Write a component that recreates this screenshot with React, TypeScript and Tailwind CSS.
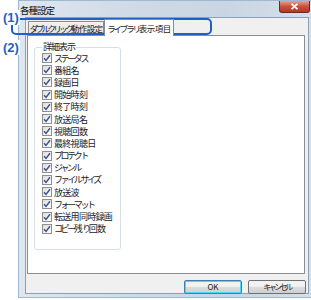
import React from "react";

const items = [
  "ステータス",
  "番組名",
  "録画日",
  "開始時刻",
  "終了時刻",
  "放送局名",
  "視聴回数",
  "最終視聴日",
  "プロテクト",
  "ジャンル",
  "ファイルサイズ",
  "放送波",
  "フォーマット",
  "転送用同時録画",
  "コピー残り回数",
];

// kana in the original UI font are narrower than kanji
function J({ t, kana, kanji }: { t: string; kana: string; kanji: string }) {
  const runs: { s: string; k: boolean }[] = [];
  for (const ch of t) {
    const k = /[\u3040-\u30ff]/.test(ch);
    const last = runs[runs.length - 1];
    if (last && last.k === k) last.s += ch;
    else runs.push({ s: ch, k });
  }
  return (
    <>
      {runs.map((r, i) => (
        <span key={i} className={r.k ? kana : kanji}>
          {r.s}
        </span>
      ))}
    </>
  );
}

function CheckBox() {
  return (
    <span className="w-[10px] h-[10px] border border-[#8f8f8f] bg-[linear-gradient(135deg,#dcdcdc,#ffffff)] flex items-center justify-center shrink-0">
      <svg width="8" height="8" viewBox="0 0 8 8">
        <path d="M1 4.2 L3 6.4 L7 1.2" fill="none" stroke="#3d4f8c" strokeWidth="1.4" />
      </svg>
    </span>
  );
}

export default function App() {
  return (
    <div className="relative w-[311px] h-[300px] bg-white overflow-hidden font-['Noto_Sans_CJK_JP','Noto_Sans',sans-serif] text-[#1a1a1a]">
      {/* window */}
      <div className="ml-[18px] w-[298px] h-[298px] flex flex-col border border-[#9fb8d2] bg-[linear-gradient(90deg,#dfe6ee,#cfdae6_40%,#c9d5e2_70%,#d6e0ea)]">
        <div className="h-[16px] flex items-start justify-between shrink-0">
          <span className="pl-[1px] pt-[3px] text-[9.5px] leading-[12px] text-[#111]">
            <J t="各種設定" kana="tracking-[-2px]" kanji="tracking-[-1px]" />
          </span>
          <span className="mr-[5px] w-[31px] h-[12px] rounded-b-[3px] border border-t-0 border-[#6b2a2a] bg-[linear-gradient(180deg,#e8a194,#c9503d_50%,#b8351f)] flex items-center justify-center">
            <svg width="9" height="7" viewBox="0 0 9 7">
              <path d="M1.5 0.8 L7.5 6.2 M7.5 0.8 L1.5 6.2" stroke="#fff" strokeWidth="1.8" />
            </svg>
          </span>
        </div>

        {/* client area */}
        <div className="ml-[6px] mr-[3px] w-[284px] h-[277px] border border-[#8aa0b8] bg-[#f0f0f0] flex flex-col">
          {/* tabs */}
          <div className="h-[17px] flex items-end pl-[2px] shrink-0">
            <div className="w-[76px] h-[15px] mb-[-1px] border border-[#898c95] bg-[linear-gradient(180deg,#f2f2f2,#e0e0e0)] flex items-center justify-center text-[8.5px] leading-none whitespace-nowrap">
              <J t="ダブルクリック動作設定" kana="tracking-[-2.6px]" kanji="tracking-[-0.7px]" />
            </div>
            <div className="relative z-10 w-[70px] h-[17px] mb-[-1px] border border-b-0 border-[#898c95] bg-white flex items-center justify-center text-[8.5px] leading-none whitespace-nowrap">
              <J t="ライブラリ表示項目" kana="tracking-[-2.2px]" kanji="tracking-[-0.5px]" />
            </div>
          </div>

          {/* panel */}
          <div className="ml-[1px] w-[278px] h-[239px] border border-[#898c95] bg-white shrink-0 pt-[11px] pl-[6px]">
            <div className="relative w-[87px] h-[203px] border border-[#d5dfe5] rounded-[3px] pt-[4px] pl-[7px]">
              <span className="absolute left-[7px] top-[-7px] px-[1px] bg-white text-[9px] leading-[12px] whitespace-nowrap">
                <J t="詳細表示" kana="tracking-[-2px]" kanji="tracking-[-1px]" />
              </span>
              <div className="flex flex-col">
                {items.map((label) => (
                  <div key={label} className="h-[12.2px] flex items-center gap-[2px]">
                    <CheckBox />
                    <span className="text-[9px] leading-none whitespace-nowrap">
                      <J t={label} kana="tracking-[-2.4px]" kanji="tracking-[-0.7px]" />
                    </span>
                  </div>
                ))}
              </div>
            </div>
          </div>

          {/* buttons */}
          <div className="flex justify-end gap-[6px] pr-[2px] pt-[6px]">
            <button className="w-[58px] h-[14px] rounded-[2px] border border-[#3c7fb1] shadow-[inset_0_0_0_1px_#48d8fb] bg-[linear-gradient(180deg,#f2f2f2_45%,#dddddd_50%,#cfcfcf)] flex items-center justify-center text-[8px] leading-none">
              OK
            </button>
            <button className="w-[58px] h-[14px] rounded-[2px] border border-[#707070] bg-[linear-gradient(180deg,#f2f2f2_45%,#dddddd_50%,#cfcfcf)] flex items-center justify-center text-[8px] leading-none whitespace-nowrap">
              <J t="キャンセル" kana="tracking-[-2.5px]" kanji="tracking-[-0.5px]" />
            </button>
          </div>
        </div>
      </div>

      {/* annotations */}
      <div className="absolute left-[11px] top-[18px] w-[201px] h-[17px] border-2 border-[#1f5fc6] rounded-[5px]" />
      <span className="absolute left-[2px] top-[10px] bg-white px-[1px] text-[13px] leading-[15px] font-bold text-[#1f5fc6] font-['Liberation_Sans',sans-serif]">(1)</span>
      <span className="absolute left-[2px] top-[40px] bg-white px-[1px] text-[13px] leading-[15px] font-bold text-[#1f5fc6] font-['Liberation_Sans',sans-serif]">(2)</span>
    </div>
  );
}
